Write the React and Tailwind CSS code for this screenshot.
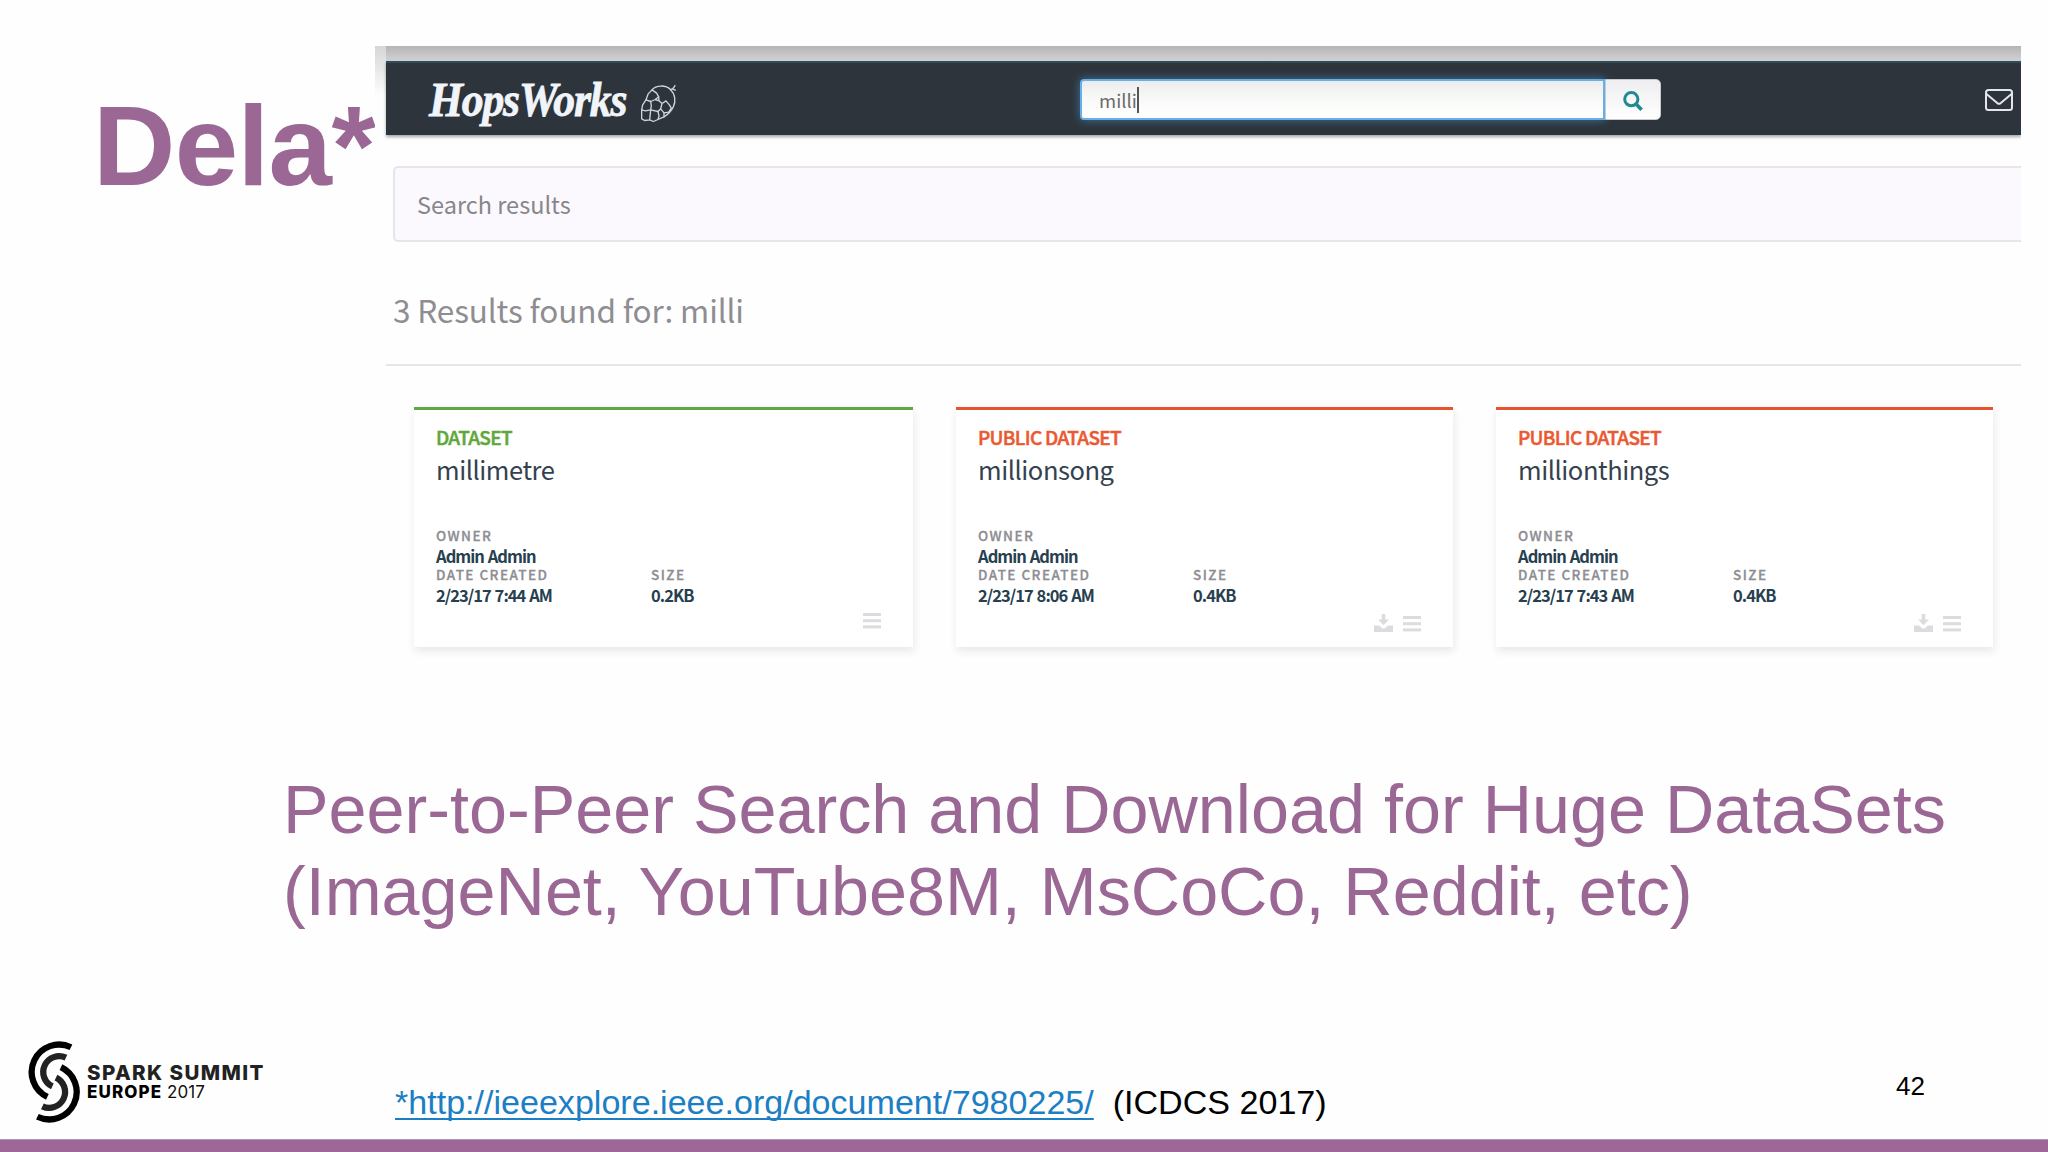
import React from 'react';

const datasets = [
  { type: 'DATASET', name: 'millimetre', owner: 'Admin Admin', created: '2/23/17 7:44 AM', size: '0.2KB', isPublic: false },
  { type: 'PUBLIC DATASET', name: 'millionsong', owner: 'Admin Admin', created: '2/23/17 8:06 AM', size: '0.4KB', isPublic: true },
  { type: 'PUBLIC DATASET', name: 'millionthings', owner: 'Admin Admin', created: '2/23/17 7:43 AM', size: '0.4KB', isPublic: true }
];

const HopIcon = () => (
  <svg viewBox="0 0 111 116" className="w-[37px] h-[39px]" fill="none" stroke="#cfd5dc" strokeWidth="4" strokeLinecap="round" strokeLinejoin="round">
    {/* Cone outline and stem */}
    <path d="M36 17 C48 2 78 2 91 16 C106 30 108 52 100 68 C92 84 82 92 72 98" />
    <path d="M91 16 C97 16 102 10 105 4 M96 14 L106 18" />
    {/* Scales */}
    <path d="M36 17 L24 30 L18 47 L32 52 L46 46 L56 38 L50 27 L36 17" />
    <path d="M18 47 L8 62 L5 77 L16 80 L32 77 L34 64 L32 52" />
    <path d="M56 38 L57 50 L66 58 L78 50 L88 62 L94 72 M46 46 L57 50 M66 58 L62 74 L54 82 L32 77 M62 74 L72 86 L86 84 L94 72" />
    <path d="M5 77 L5 104 L14 109 L29 107 L32 77 M29 107 L40 112 L54 106 L57 96 L54 82 M54 106 L72 98 L72 86" />
  </svg>
);

const SearchIcon = () => (
  <svg viewBox="0 0 20 20" className="w-5 h-5 mt-[3px]" fill="none" stroke="#1f8b90" strokeWidth="3">
    <circle cx="8.3" cy="8.2" r="6.6" />
    <path d="M12.8 12.8 L18.6 18.8" strokeWidth="3.6" />
  </svg>
);

const MailIcon = () => (
  <svg viewBox="0 0 28 22" className="w-7 h-[22px]" fill="none" stroke="#e3e6ec" strokeWidth="2">
    <rect x="1" y="1" width="26" height="20" rx="2.5" />
    <path d="M1.5 5 L12.5 14.2 Q14 15.4 15.5 14.2 L26.5 5" />
  </svg>
);

const DownloadIcon = () => (
  <svg viewBox="0 0 19 18" className="w-[19px] h-[18px]" fill="#dddbdf">
    <path d="M7.7 0 H11.3 V5.5 H15 L9.5 11.3 L4 5.5 H7.7 Z" />
    <path d="M0 11.5 H5.2 L7.8 14 Q9.5 15 11.2 14 L13.8 11.5 H19 V18 H0 Z" />
  </svg>
);

const MenuIcon = () => (
  <svg viewBox="0 0 18 16" className="w-[18px] h-4" fill="#dddbdf">
    <rect width="18" height="3" />
    <rect y="6.2" width="18" height="3" />
    <rect y="12.4" width="18" height="3" />
  </svg>
);

const SparkLogo = () => (
  <svg viewBox="84 60 160 252" className="w-[53px] h-[84px]" fill="none" strokeWidth="19">
    <path d="M213.7 81 A83 83 0 0 0 142.5 231" stroke="#000" />
    <path d="M198.6 112.6 A48 48 0 0 0 157.5 199.4" stroke="#222" />
    <path d="M112.3 291 A83 83 0 0 0 183.5 141" stroke="#000" />
    <path d="M127.4 259.4 A48 48 0 0 0 168.5 172.6" stroke="#222" />
  </svg>
);

const Field = ({ label, value }) => (
  <div>
    <div className="h-[18px] text-[13.5px] leading-[18px] font-medium tracking-[1.45px] text-[#8d8d92] [-webkit-text-stroke:0.3px_#8d8d92]">{label}</div>
    <div className="h-[21px] text-[16.5px] leading-[24px] font-bold tracking-[-0.95px] [word-spacing:1px] text-[#26404f]">{value}</div>
  </div>
);

const DatasetCard = ({ item }) => (
  <div className={`flex flex-col h-60 border-t-[3px] bg-white pl-[22px] pr-8 shadow-[1px_4px_8px_rgba(60,40,80,0.11)] ${
    item.isPublic ? 'border-[#e8532f]' : 'border-[#5ea944]'
  }`}>
    <div className={`mt-[14px] text-[19px] leading-[26px] font-medium tracking-[-0.7px] ${
      item.isPublic ? 'text-[#ea5932] [-webkit-text-stroke:0.5px_#ea5932]' : 'text-[#5ea83a] [-webkit-text-stroke:0.5px_#5ea83a]'
    }`}>
      {item.type}
    </div>
    <div className="text-[25.5px] leading-[38px] tracking-[-0.45px] text-[#34414f]">{item.name}</div>
    <div className="mt-[38px]">
      <Field label="OWNER" value={item.owner} />
    </div>
    <div className="grid grid-cols-[215px_1fr]">
      <Field label="DATE CREATED" value={item.created} />
      <Field label="SIZE" value={item.size} />
    </div>
    <div className={`flex justify-end gap-[10px] ${item.isPublic ? 'mt-[10px] items-end' : 'mt-[9px]'}`}>
      {item.isPublic && <DownloadIcon />}
      <MenuIcon />
    </div>
  </div>
);

const Navbar = () => (
  <div className="flex items-start h-[74px] bg-[#2d343c] border-t-2 border-[#2f4c5a] shadow-[0_2px_3px_rgba(0,0,0,0.35)]">
    <div className="w-[211px] pl-[43px] pt-[9px] whitespace-nowrap">
      <span className="inline-block origin-left scale-x-[0.91] font-['Liberation_Serif',serif] font-bold italic text-[48px] leading-[56px] tracking-[-1.3px] text-[#f1f5fa] [-webkit-text-stroke:0.8px_#f1f5fa]">HopsWorks</span>
    </div>
    <div className="ml-[43px] pt-[21px]">
      <HopIcon />
    </div>
    <div className="flex ml-[403px] mt-4 h-[41px]">
      <div className="flex items-center w-[525px] pl-[17px] rounded-l-[4px] border-2 border-[#66afe9] bg-linear-to-b from-[#ececec] via-[#f8faf8] to-white shadow-[0_0_10px_rgba(80,160,220,0.6)]">
        <span className="text-[18.5px] leading-[30px] text-[#6b6b6b]">milli</span>
        <span className="w-[2px] h-[26px] bg-[#555]" />
      </div>
      <div className="flex justify-center w-14 pt-2 rounded-r-[5px] border border-[#c9c9cd] bg-linear-to-b from-[#eeeef0] to-white">
        <SearchIcon />
      </div>
    </div>
    <div className="ml-auto mr-2 mt-[26px]">
      <MailIcon />
    </div>
  </div>
);

const SearchPage = () => (
  <div className="w-[1646px] h-[640px] mt-[46px] overflow-hidden font-['Noto_Sans_CJK_SC',sans-serif]">
    {/* Window chrome peeking out above the navbar */}
    <div className="flex h-[89px] bg-linear-to-b from-[#b5b5b5] to-[#d2d2d2] to-[15px]">
      <div className="w-[11px] bg-linear-to-b from-[#d6d6d6] to-[#fefefe] to-[50px]" />
      <div className="grow pt-[15px]">
        <Navbar />
      </div>
    </div>
    <div className="pl-[11px]">
      <div className="h-[76px] mt-[31px] ml-[7px] pl-[22px] rounded-l-[5px] border-2 border-r-0 border-[#e7e5ea] bg-[#fbf9fd] text-[23.5px] leading-[72px] text-[#88868b]">
        Search results
      </div>
      <div className="h-[124px] pl-[7px] pt-[47px] border-b-2 border-[#e6e6e6] text-[31.5px] leading-[40px] tracking-[-0.12px] text-[#8f8d92]">
        3 Results found for: milli
      </div>
      <div className="grid grid-cols-[499px_497px_497px] pl-7 pt-[41px] gap-x-[43px]">
        {datasets.map((item) => (
          <DatasetCard key={item.name} item={item} />
        ))}
      </div>
    </div>
  </div>
);

const App = () => (
  <div className="flex flex-col w-[2048px] h-[1152px] overflow-hidden bg-[#fefefe] font-['Liberation_Sans',sans-serif]">
    <div className="flex items-start">
      <h1 className="w-[375px] pl-[93px] pt-[89px] font-bold text-[114px] leading-[114px] tracking-[-0.6px] text-[#9b6896] whitespace-nowrap">Dela*</h1>
      <SearchPage />
    </div>

    <p className="mt-[82px] ml-[283px] text-[68.3px] leading-[82px] text-[#9b6896] whitespace-nowrap">
      Peer-to-Peer Search and Download for Huge DataSets
      <br />
      (ImageNet, YouTube8M, MsCoCo, Reddit, etc)
    </p>

    <div className="flex items-start grow pl-7 pt-[108px]">
      <SparkLogo />
      <div className="w-[314px] pl-[6px] pt-[21px] font-['Inter',sans-serif] text-[#111]">
        <div className="text-[20.5px] leading-[24px] font-extrabold tracking-[1.4px] text-[#222] whitespace-nowrap">SPARK SUMMIT</div>
        <div className="text-[17px] leading-[15px] whitespace-nowrap">
          <span className="font-extrabold tracking-[1.1px] text-black">EUROPE</span> <span className="tracking-[0.1px]">2017</span>
        </div>
      </div>
      <div className="pt-[42px] text-[34.07px] leading-[40px] text-black whitespace-pre">
        <a href="http://ieeexplore.ieee.org/document/7980225/" className="text-[#1c7fc4] underline decoration-2 underline-offset-[4px] [text-decoration-skip-ink:none]">*http://ieeexplore.ieee.org/document/7980225/</a>
        {'  (ICDCS 2017)'}
      </div>
      <div className="ml-auto pr-[123px] pt-[30px] text-[26px] leading-[32px] text-black">42</div>
    </div>

    <div className="h-[13px] shrink-0 bg-[#9d6797] border-t border-[#a99aab]" />
  </div>
);

export default App;
